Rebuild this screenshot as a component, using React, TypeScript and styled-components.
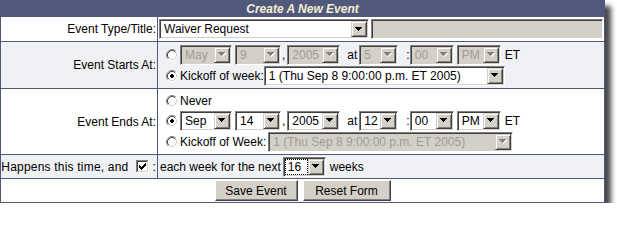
import React from "react";
import styled, { createGlobalStyle } from "styled-components";

const C = {
  frame: "#50597b",
  stripe: "#f0f1f4",
  face: "#d4d0c8",
  shadow: "#808080",
  dark: "#404040",
  light: "#ffffff",
  title: "#f4f0d2",
  disabledText: "#9f9c95",
};

const GlobalStyle = createGlobalStyle`
  html, body { margin: 0; padding: 0; background: #ffffff; }
  body {
    font-family: "Liberation Sans", Arial, sans-serif;
    font-size: 12px;
    color: #000000;
  }
`;

const Panel = styled.form`
  width: 605px;
  box-sizing: border-box;
  margin: 0;
  border: 1px solid ${C.frame};
  background: #ffffff;
  box-shadow: 6px 6px 5px rgba(0, 0, 0, 0.72);
`;

const Header = styled.h1`
  margin: 0;
  height: 16px;
  line-height: 16px;
  background: ${C.frame};
  color: ${C.title};
  font-size: 12px;
  font-weight: bold;
  font-style: italic;
  text-align: center;
`;

const Row = styled.div<{ $h: number; $stripe?: boolean; $divider?: boolean }>`
  display: grid;
  grid-template-columns: 157px 1fr;
  height: ${(p) => p.$h}px;
  background: ${(p) => (p.$stripe ? C.stripe : "#ffffff")};
  border-top: ${(p) => (p.$divider ? `1px solid ${C.frame}` : "none")};
`;

const Label = styled.div<{ $spacing?: number }>`
  display: flex;
  align-items: center;
  justify-content: flex-end;
  box-sizing: border-box;
  padding-right: 1px;
  border-right: 1px solid ${C.frame};
  white-space: nowrap;
  letter-spacing: ${(p) => p.$spacing ?? 0}px;
`;

const Field = styled.div`
  display: flex;
  flex-direction: column;
  justify-content: center;
  padding-left: 1px;
  min-width: 0;
`;

const Line = styled.div<{ $h?: number }>`
  display: flex;
  align-items: center;
  height: ${(p) => p.$h ?? 21}px;
  white-space: nowrap;
`;

const Text = styled.span<{ $l?: number; $r?: number }>`
  flex: none;
  padding-left: ${(p) => p.$l ?? 0}px;
  padding-right: ${(p) => p.$r ?? 0}px;
`;

const ButtonBar = styled.div`
  grid-column: 1 / -1;
  display: flex;
  align-items: center;
  justify-content: center;
  gap: 5px;
`;

/* ---- classic form controls ---- */

const SelectFrame = styled.span<{ $w: number; $l?: number; $disabled?: boolean }>`
  flex: none;
  display: inline-flex;
  align-items: center;
  box-sizing: border-box;
  width: ${(p) => p.$w}px;
  height: 20px;
  margin-left: ${(p) => p.$l ?? 0}px;
  padding: 1px;
  border: 1px solid;
  border-color: ${C.shadow} ${C.light} ${C.light} ${C.shadow};
  box-shadow: inset 1px 1px ${C.dark}, inset -1px -1px ${C.face};
  background: ${(p) => (p.$disabled ? C.face : "#ffffff")};
`;

const NativeSelect = styled.select<{ $focus?: boolean }>`
  appearance: none;
  -webkit-appearance: none;
  flex: 1;
  min-width: 0;
  height: 16px;
  margin: 0;
  padding: 0 0 0 3px;
  border: 0;
  border-radius: 0;
  background: transparent;
  font-family: inherit;
  font-size: 12px;
  line-height: 16px;
  color: #000000;
  opacity: 1;
  outline: ${(p) => (p.$focus ? "1px dotted #000000" : "none")};
  outline-offset: -1px;
  &:disabled {
    color: ${C.disabledText};
  }
`;

const DropButton = styled.span`
  flex: none;
  width: 16px;
  height: 16px;
  box-sizing: border-box;
  display: flex;
  align-items: center;
  justify-content: center;
  background: ${C.face};
  border: 1px solid;
  border-color: ${C.face} ${C.dark} ${C.dark} ${C.face};
  box-shadow: inset 1px 1px ${C.light}, inset -1px -1px ${C.shadow};
`;

const ARROW = "M0 0h7v1H0z M1 1h5v1H1z M2 2h3v1H2z M3 3h1v1H3z";

const Arrow = ({ disabled }: { disabled?: boolean }) => (
  <svg width="8" height="5" viewBox="0 0 8 5" aria-hidden="true" shapeRendering="crispEdges">
    {disabled && <path d={ARROW} transform="translate(1 1)" fill="#ffffff" />}
    <path d={ARROW} fill={disabled ? C.shadow : "#000000"} />
  </svg>
);

type SelectProps = {
  width: number;
  value: string;
  options?: string[];
  disabled?: boolean;
  focus?: boolean;
  left?: number;
  name: string;
};

const Select = ({ width, value, options, disabled, focus, left, name }: SelectProps) => {
  const list = options && options.includes(value) ? options : [value, ...(options ?? [])];
  return (
    <SelectFrame $w={width} $l={left} $disabled={disabled}>
      <NativeSelect name={name} defaultValue={value} disabled={disabled} $focus={focus}>
        {list.map((o) => (
          <option key={o} value={o}>
            {o}
          </option>
        ))}
      </NativeSelect>
      <DropButton>
        <Arrow disabled={disabled} />
      </DropButton>
    </SelectFrame>
  );
};

const TitleInput = styled.input`
  flex: none;
  box-sizing: border-box;
  width: 232px;
  height: 20px;
  margin: 0 0 0 2px;
  padding: 0 3px;
  border: 1px solid;
  border-color: ${C.shadow} ${C.light} ${C.light} ${C.shadow};
  box-shadow: inset 1px 1px ${C.dark}, inset -1px -1px ${C.face};
  background: ${C.face};
  font-family: inherit;
  font-size: 12px;
`;

const Button = styled.button<{ $w: number }>`
  width: ${(p) => p.$w}px;
  height: 21px;
  box-sizing: border-box;
  margin: 0;
  padding: 0;
  background: ${C.face};
  color: #000000;
  font-family: inherit;
  font-size: 12px;
  border: 1px solid;
  border-color: ${C.light} ${C.dark} ${C.dark} ${C.light};
  box-shadow: inset -1px -1px ${C.shadow};
`;

const RadioBox = styled.span`
  flex: none;
  display: inline-flex;
  width: 12px;
  height: 12px;
  margin: 0 2px 0 7px;
`;

const Radio = ({ checked }: { checked?: boolean }) => (
  <RadioBox role="radio" aria-checked={!!checked}>
    <svg width="12" height="12" viewBox="0 0 12 12" aria-hidden="true">
      <circle cx="6" cy="6" r="4.5" fill="#ffffff" />
      <path d="M2.11 9.89A5.5 5.5 0 0 1 9.89 2.11" fill="none" stroke={C.shadow} strokeWidth="1" />
      <path d="M9.89 2.11A5.5 5.5 0 0 1 2.11 9.89" fill="none" stroke={C.light} strokeWidth="1" />
      <path d="M2.82 9.18A4.5 4.5 0 0 1 9.18 2.82" fill="none" stroke={C.dark} strokeWidth="1" />
      <path d="M9.18 2.82A4.5 4.5 0 0 1 2.82 9.18" fill="none" stroke={C.face} strokeWidth="1" />
      {checked && (
        <path d="M5 4h2v1H5z M4 5h4v2H4z M5 7h2v1H5z" fill="#000000" shapeRendering="crispEdges" />
      )}
    </svg>
  </RadioBox>
);

const CheckBox = styled.span`
  flex: none;
  display: inline-flex;
  width: 13px;
  height: 13px;
  margin: 0 3px 0 8px;
`;

const CHECK = [2, 3, 4, 3, 2, 1, 0]
  .map((y, i) => `M${3 + i} ${3 + y}h1v3h-1z`)
  .join(" ");

const Check = () => (
  <CheckBox role="checkbox" aria-checked="true">
    <svg width="13" height="13" viewBox="0 0 13 13" aria-hidden="true" shapeRendering="crispEdges">
      <rect x="0" y="0" width="13" height="13" fill={C.light} />
      <path d="M0 0h12v1H0z M0 0h1v12H0z" fill={C.shadow} />
      <path d="M1 1h10v1H1z M1 1h1v10H1z" fill={C.dark} />
      <path d="M1 11h11v1H1z M11 1h1v11h-1z" fill={C.face} />
      <path d={CHECK} fill="#000000" />
    </svg>
  </CheckBox>
);

const MONTHS = ["Jan", "Feb", "Mar", "Apr", "May", "Jun", "Jul", "Aug", "Sep", "Oct", "Nov", "Dec"];
const DAYS = Array.from({ length: 31 }, (_, i) => String(i + 1));
const HOURS = Array.from({ length: 12 }, (_, i) => String(i + 1));
const MINUTES = ["00", "15", "30", "45"];
const KICKOFF = "1 (Thu Sep 8 9:00:00 p.m. ET 2005)";

type DateLineProps = {
  prefix: string;
  month: string;
  day: string;
  hour: string;
  disabled?: boolean;
  checked?: boolean;
};

const DateLine = ({ prefix, month, day, hour, disabled, checked }: DateLineProps) => (
  <Line>
    <Radio checked={checked} />
    <Select name={`${prefix}Month`} width={52} value={month} options={MONTHS} disabled={disabled} />
    <Select name={`${prefix}Day`} width={46} left={3} value={day} options={DAYS} disabled={disabled} />
    <Text $l={1} $r={2}>,</Text>
    <Select name={`${prefix}Year`} width={53} value="2005" options={["2005", "2006"]} disabled={disabled} />
    <Text $l={7} $r={2}>at</Text>
    <Select name={`${prefix}Hour`} width={39} value={hour} options={HOURS} disabled={disabled} />
    <Text $l={8}>:</Text>
    <Select name={`${prefix}Minute`} width={44} value="00" options={MINUTES} disabled={disabled} />
    <Select name={`${prefix}Meridiem`} width={44} left={3} value="PM" options={["AM", "PM"]} disabled={disabled} />
    <Text $l={4}>ET</Text>
  </Line>
);

export default function App() {
  return (
    <>
      <GlobalStyle />
      <Panel onSubmit={(e) => e.preventDefault()}>
        <Header>Create A New Event</Header>

        <Row $h={24}>
          <Label>Event Type/Title:</Label>
          <Field>
            <Line $h={24}>
              <Select name="eventType" width={210} value="Waiver Request" options={["Waiver Request", "Trade Deadline", "Draft", "Other"]} />
              <TitleInput type="text" name="eventTitle" disabled defaultValue="" />
            </Line>
          </Field>
        </Row>

        <Row $h={46} $stripe $divider>
          <Label>Event Starts At:</Label>
          <Field>
            <DateLine prefix="start" month="May" day="9" hour="5" disabled />
            <Line>
              <Radio checked />
              <Text>Kickoff of week:</Text>
              <Select name="startWeek" width={241} value={KICKOFF} />
            </Line>
          </Field>
        </Row>

        <Row $h={65} $divider>
          <Label>Event Ends At:</Label>
          <Field>
            <Line $h={19}>
              <Radio />
              <Text>Never</Text>
            </Line>
            <DateLine prefix="end" month="Sep" day="14" hour="12" checked />
            <Line>
              <Radio />
              <Text>Kickoff of Week:</Text>
              <Select name="endWeek" width={245} left={2} value={KICKOFF} disabled />
            </Line>
          </Field>
        </Row>

        <Row $h={23} $stripe $divider>
          <Label $spacing={0.2}>
            Happens this time, and
            <Check />:
          </Label>
          <Field>
            <Line $h={23}>
              <Text $l={1} $r={2}>each week for the next</Text>
              <Select name="repeatWeeks" width={43} value="16" options={Array.from({ length: 17 }, (_, i) => String(i + 1))} focus />
              <Text $l={4}>weeks</Text>
            </Line>
          </Field>
        </Row>

        <Row $h={23} $divider>
          <ButtonBar>
            <Button type="submit" $w={83}>Save Event</Button>
            <Button type="reset" $w={88}>Reset Form</Button>
          </ButtonBar>
        </Row>
      </Panel>
    </>
  );
}
